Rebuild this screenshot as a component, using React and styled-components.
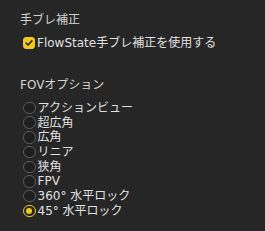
import React, { useState } from 'react';
import styled, { createGlobalStyle } from 'styled-components';

const GlobalStyle = createGlobalStyle`
  html, body {
    margin: 0;
    padding: 0;
    background: #262626;
  }
  body {
    font-family: "DejaVu Sans", "Noto Sans CJK JP", sans-serif;
    -webkit-font-smoothing: antialiased;
  }
`;

const fovOptions = [
  'アクションビュー',
  '超広角',
  '広角',
  'リニア',
  '狭角',
  'FPV',
  '360° 水平ロック',
  '45° 水平ロック',
];

function App() {
  const [stabilize, setStabilize] = useState(true);
  const [fov, setFov] = useState(7);

  return (
    <Wrapper>
      <GlobalStyle />
      <Section>
        <Title>手ブレ補正</Title>
        <Row onClick={() => setStabilize(!stabilize)}>
          <Check checked={stabilize}>
            {stabilize && (
              <svg width="8" height="8" viewBox="0 0 8 8">
                <polyline points="1.2,4.2 3.1,6 6.9,1.8" fill="none" stroke="#2a2410" strokeWidth="1.6" strokeLinecap="round" strokeLinejoin="round" />
              </svg>
            )}
          </Check>
          <Label>FlowState手ブレ補正を使用する</Label>
        </Row>
      </Section>

      <Section className='fov'>
        <Title>FOVオプション</Title>
        <List>
          {fovOptions.map((item, i) => (
            <Row key={item} onClick={() => setFov(i)}>
              <Radio selected={fov === i} />
              <Label>{item}</Label>
            </Row>
          ))}
        </List>
      </Section>
    </Wrapper>
  );
}

const Wrapper = styled.div`
  padding: 13px 0 0 20px;
  height: 231px;
  box-sizing: border-box;
  color: #d6d6d6;

  .fov {
    margin-top: 27px;
  }
`;

const Section = styled.div`
  display: flex;
  flex-direction: column;
  gap: 8px;
`;

const Title = styled.div`
  font-size: 12px;
  line-height: 15px;
  color: #d2d2d2;
`;

const List = styled.div`
  display: flex;
  flex-direction: column;
`;

const Row = styled.div`
  display: flex;
  align-items: center;
  gap: 2px;
  padding-left: 3px;
  height: 14.7px;
  cursor: default;
`;

const Label = styled.span`
  font-size: 12px;
  line-height: 14px;
  color: #e0e0e0;
  white-space: nowrap;
`;

const Check = styled.span`
  width: 12px;
  height: 12px;
  border-radius: 3px;
  box-sizing: border-box;
  background: ${(p) => (p.checked ? '#f2c81b' : '#1c1c1c')};
  border: 1px solid ${(p) => (p.checked ? '#f2c81b' : '#5a5a5a')};
  display: flex;
  align-items: center;
  justify-content: center;
  flex-shrink: 0;
`;

const Radio = styled.span`
  width: 12.5px;
  height: 12.5px;
  border-radius: 50%;
  box-sizing: border-box;
  border: ${(p) => (p.selected ? '1.5px solid #f2c81b' : '1px solid #5c5c5c')};
  background: ${(p) => (p.selected ? '#262626' : '#1f1f1f')};
  display: flex;
  align-items: center;
  justify-content: center;
  flex-shrink: 0;

  &::after {
    content: '';
    display: ${(p) => (p.selected ? 'block' : 'none')};
    width: 6px;
    height: 6px;
    border-radius: 50%;
    background: #f2c81b;
  }
`;

export default App;
